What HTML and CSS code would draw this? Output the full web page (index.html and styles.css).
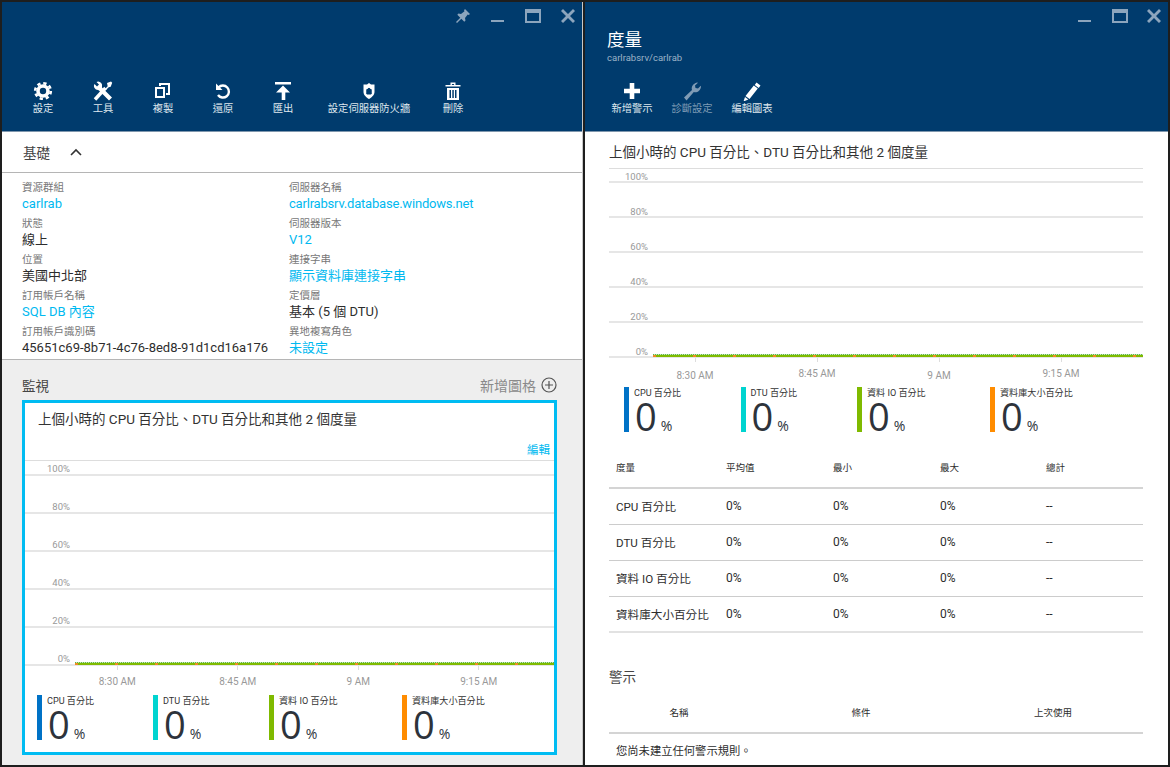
FILE: index.html
```html
<!DOCTYPE html>
<html lang="zh-Hant">
<head>
<meta charset="utf-8">
<title>SQL Database</title>
<link rel="stylesheet" href="styles.css">
</head>
<body>
<div class="desktop">
  <section class="blade blade-left">
    <header class="blade-head">
      <div class="controls">
        <svg class="ctl ctl-pin" viewBox="0 0 16 16"><path d="M10 1l5 5-1.300 1-1-.5L10 10l.5 2.500-1.200 1.200-3-3L2 15l-1-1 4.300-4.300-3-3L3.500 5.500 6 6l3.500-2.800-.5-1z"/></svg>
        <svg class="ctl ctl-min" viewBox="0 0 16 16"><rect x="1" y="12" width="13" height="2"/></svg>
        <svg class="ctl ctl-max" viewBox="0 0 16 16"><path d="M0 1h16v14H0zM2 5v8h12V5z" fill-rule="evenodd"/></svg>
        <svg class="ctl ctl-close" viewBox="0 0 16 16"><path d="M1 3l2-2 5 5 5-5 2 2-5 5 5 5-2 2-5-5-5 5-2-2 5-5z"/></svg>
      </div>
      <div class="toolbar toolbar-left">
        <div class="tool">
          <svg class="ico" viewBox="0 0 20 20"><circle cx="10" cy="10" r="5" fill="none" stroke="#fff" stroke-width="3.600"/><circle cx="10" cy="10" r="7.800" fill="none" stroke="#fff" stroke-width="2.600" stroke-dasharray="3.300 2.830"/></svg>
          <span>設定</span>
        </div>
        <div class="tool">
          <svg class="ico" viewBox="0 0 20 20"><path d="M2 18.500L12.500 7" stroke="#fff" stroke-width="3.400" fill="none"/><path d="M9 3.500A4 4 0 0 0 3.500 1l2.500 2.500-2 2L1.500 3A4 4 0 0 0 5 9l1 .5 10 10 3-3-10-10z" fill="#fff"/><path d="M14 2l4-1.500 1.200 1.200-1.500 4-2 .5-3 3-1-1 3-3z" fill="#fff"/></svg>
          <span>工具</span>
        </div>
        <div class="tool">
          <svg class="ico" viewBox="0 0 20 20"><path d="M3 7h8v9H3z M7 5V3h9v10h-3" fill="none" stroke="#fff" stroke-width="2"/></svg>
          <span>複製</span>
        </div>
        <div class="tool">
          <svg class="ico" viewBox="0 0 20 20"><path d="M5.500 6.500A6 6 0 1 1 5 14" fill="none" stroke="#fff" stroke-width="2.400"/><path d="M3 2.500v6.500h6.500z" fill="#fff"/></svg>
          <span>還原</span>
        </div>
        <div class="tool">
          <svg class="ico" viewBox="0 0 20 20"><path d="M2 1h16v2.400H2zM10 4.500l7 7h-4.700V19H8.700v-7.500H3z" fill="#fff"/></svg>
          <span>匯出</span>
        </div>
        <div class="tool tool-wide">
          <svg class="ico" viewBox="0 0 20 20"><path d="M10 2l2 1.500h3.500V11c0 3-3 5.500-5.500 7-2.500-1.500-5.500-4-5.500-7V3.500H8z" fill="#fff"/><path d="M7.800 8.500h4.400v4.500H7.800zM8.800 8.500a1.200 1.200 0 0 1 2.400 0" fill="#003b6d" stroke="#003b6d"/></svg>
          <span>設定伺服器防火牆</span>
        </div>
        <div class="tool tool-end">
          <svg class="ico" viewBox="0 0 20 20"><path d="M2.500 4h15v1.600h-15zM7.500 1.500h5V4h-1.400V3H8.900v1H7.500z" fill="#fff"/><path d="M4 7h12v12H4zM6.500 9v8h1.500V9zM9.300 9v8h1.500V9zM12 9v8h1.500V9z" fill="#fff" fill-rule="evenodd"/></svg>
          <span>刪除</span>
        </div>
      </div>
    </header>

    <div class="essentials-head">
      <h2 class="essentials-title">基礎</h2>
      <svg class="chevron" viewBox="0 0 12 8"><path d="M1 7l5-5 5 5" fill="none" stroke="#333" stroke-width="1.600"/></svg>
    </div>

    <div class="props">
      <div class="prop"><div class="prop-label">資源群組</div><div class="prop-value link">carlrab</div></div>
      <div class="prop"><div class="prop-label">伺服器名稱</div><div class="prop-value link prop-host">carlrabsrv.database.windows.net</div></div>
      <div class="prop"><div class="prop-label">狀態</div><div class="prop-value">線上</div></div>
      <div class="prop"><div class="prop-label">伺服器版本</div><div class="prop-value link">V12</div></div>
      <div class="prop"><div class="prop-label">位置</div><div class="prop-value">美國中北部</div></div>
      <div class="prop"><div class="prop-label">連接字串</div><div class="prop-value link">顯示資料庫連接字串</div></div>
      <div class="prop"><div class="prop-label">訂用帳戶名稱</div><div class="prop-value link">SQL DB 內容</div></div>
      <div class="prop"><div class="prop-label">定價層</div><div class="prop-value">基本 (5 個 DTU)</div></div>
      <div class="prop"><div class="prop-label">訂用帳戶識別碼</div><div class="prop-value">45651c69-8b71-4c76-8ed8-91d1cd16a176</div></div>
      <div class="prop"><div class="prop-label">異地複寫角色</div><div class="prop-value link">未設定</div></div>
    </div>

    <div class="monitor">
      <div class="monitor-head">
        <h2 class="monitor-title">監視</h2>
        <div class="add-tile">
          <span>新增圖格</span>
          <svg class="add-ico" viewBox="0 0 16 16"><circle cx="8" cy="8" r="7" fill="none" stroke="#555" stroke-width="1.200"/><path d="M8 4v8M4 8h8" stroke="#555" stroke-width="1.200"/></svg>
        </div>
      </div>
      <div class="tile">
        <h3 class="chart-title tile-title">上個小時的 CPU 百分比、DTU 百分比和其他 2 個度量</h3>
        <div class="edit-row"><span class="link edit-link">編輯</span></div>
        <div class="chart chart-small">
          <div class="grid-row"><span>100%</span></div>
          <div class="grid-row"><span>80%</span></div>
          <div class="grid-row"><span>60%</span></div>
          <div class="grid-row"><span>40%</span></div>
          <div class="grid-row"><span>20%</span></div>
          <div class="grid-row grid-zero"><span>0%</span><i class="series"></i></div>
        </div>
        <div class="axis axis-small">
          <div class="tick">8:30 AM</div><div class="tick">8:45 AM</div><div class="tick">9 AM</div><div class="tick">9:15 AM</div>
        </div>
        <div class="legend legend-small">
          <div class="metric m-cpu"><div class="metric-name">CPU 百分比</div><div class="metric-val"><b>0</b><span>%</span></div></div>
          <div class="metric m-dtu"><div class="metric-name">DTU 百分比</div><div class="metric-val"><b>0</b><span>%</span></div></div>
          <div class="metric m-io"><div class="metric-name">資料 IO 百分比</div><div class="metric-val"><b>0</b><span>%</span></div></div>
          <div class="metric m-db"><div class="metric-name">資料庫大小百分比</div><div class="metric-val"><b>0</b><span>%</span></div></div>
        </div>
      </div>
    </div>
  </section>

  <section class="blade blade-right">
    <header class="blade-head">
      <div class="controls controls-right">
        <svg class="ctl ctl-min" viewBox="0 0 16 16"><rect x="1" y="12" width="13" height="2"/></svg>
        <svg class="ctl ctl-max" viewBox="0 0 16 16"><path d="M0 1h16v14H0zM2 5v8h12V5z" fill-rule="evenodd"/></svg>
        <svg class="ctl ctl-close" viewBox="0 0 16 16"><path d="M1 3l2-2 5 5 5-5 2 2-5 5 5 5-2 2-5-5-5 5-2-2 5-5z"/></svg>
      </div>
      <div class="blade-titles">
        <h1 class="blade-title">度量</h1>
        <div class="blade-sub">carlrabsrv/carlrab</div>
      </div>
      <div class="toolbar toolbar-right">
        <div class="tool">
          <svg class="ico" viewBox="0 0 20 20"><path d="M7.700 2h4.600v5.700H18v4.600h-5.700V18H7.700v-5.700H2V7.700h5.700z" fill="#fff"/></svg>
          <span>新增警示</span>
        </div>
        <div class="tool tool-off">
          <svg class="ico" viewBox="0 0 20 20"><path d="M2 16.500l8-7.500c-1-3 1-6.500 5-7.500l1 .3-3 2.700.5 2.500 2.500.5 2.800-2.800.2 1c-.5 4-4 6.300-7.200 5.300L4.500 19.500z" fill="#7f9bb5"/></svg>
          <span>診斷設定</span>
        </div>
        <div class="tool">
          <svg class="ico" viewBox="0 0 20 20"><path d="M14.500 1.500l4 3-1.800 2.500-4-3zM11.800 4.500l4 3-8.300 10.500-4-3zM3 16l3.300 2.600L1.500 20.500z" fill="#fff"/></svg>
          <span>編輯圖表</span>
        </div>
      </div>
    </header>

    <div class="metrics-body">
      <h3 class="chart-title">上個小時的 CPU 百分比、DTU 百分比和其他 2 個度量</h3>
      <div class="chart chart-large">
        <div class="grid-row"><span>100%</span></div>
        <div class="grid-row"><span>80%</span></div>
        <div class="grid-row"><span>60%</span></div>
        <div class="grid-row"><span>40%</span></div>
        <div class="grid-row"><span>20%</span></div>
        <div class="grid-row grid-zero"><span>0%</span><i class="series"></i></div>
      </div>
      <div class="axis axis-large">
        <div class="tick">8:30 AM</div><div class="tick">8:45 AM</div><div class="tick">9 AM</div><div class="tick">9:15 AM</div>
      </div>
      <div class="legend legend-large">
        <div class="metric m-cpu"><div class="metric-name">CPU 百分比</div><div class="metric-val"><b>0</b><span>%</span></div></div>
        <div class="metric m-dtu"><div class="metric-name">DTU 百分比</div><div class="metric-val"><b>0</b><span>%</span></div></div>
        <div class="metric m-io"><div class="metric-name">資料 IO 百分比</div><div class="metric-val"><b>0</b><span>%</span></div></div>
        <div class="metric m-db"><div class="metric-name">資料庫大小百分比</div><div class="metric-val"><b>0</b><span>%</span></div></div>
      </div>

      <div class="mtable">
        <div class="mrow mhead"><div>度量</div><div>平均值</div><div>最小</div><div>最大</div><div>總計</div></div>
        <div class="mrow"><div>CPU 百分比</div><div>0%</div><div>0%</div><div>0%</div><div>--</div></div>
        <div class="mrow"><div>DTU 百分比</div><div>0%</div><div>0%</div><div>0%</div><div>--</div></div>
        <div class="mrow"><div>資料 IO 百分比</div><div>0%</div><div>0%</div><div>0%</div><div>--</div></div>
        <div class="mrow mlast"><div>資料庫大小百分比</div><div>0%</div><div>0%</div><div>0%</div><div>--</div></div>
      </div>

      <h2 class="alerts-title">警示</h2>
      <div class="arow"><div>名稱</div><div>條件</div><div>上次使用</div></div>
      <div class="aempty">您尚未建立任何警示規則。</div>
    </div>
  </section>
</div>
</body>
</html>
```

FILE: styles.css
```css
* { box-sizing: border-box; }
html, body { margin: 0; padding: 0; height: 100%; overflow: hidden; }
body {
  background: #1e1e1e;
  color: #2d2d2d;
  font-family: Roboto, "Noto Sans CJK TC", sans-serif;
  font-size: 13px;
}
h1, h2, h3 { margin: 0; font-weight: 400; }
.link { color: #00b9f0; }

.desktop { display: flex; gap: 2px; padding: 2px; height: 767px; }
.blade { display: flex; flex-direction: column; background: #fff; overflow: hidden; }
.blade-left { width: 581px; border-right: 1px solid #c8c8c8; }
.blade-right { flex: 1; }

.blade-head {
  height: 130px;
  flex: none;
  background: #003b6d;
  border-bottom: 1px solid #7f97ad;
  display: flex;
  flex-direction: column;
  color: #fff;
}
.controls { display: flex; justify-content: flex-end; gap: 19px; padding: 6px 6px 0 0; height: 26px; flex: none; }
.controls-right { gap: 18.500px; }
.ctl { width: 16px; height: 16px; fill: #8ca5bd; display: block; }

.toolbar { display: flex; margin-top: auto; padding-bottom: 15px; }
.toolbar-left { padding-left: 11px; }
.toolbar-right { padding-left: 17px; }
.tool { width: 60px; display: flex; flex-direction: column; align-items: center; font-size: 10.300px; line-height: 14px; color: #dfe7ee; }
.tool-wide { width: 112px; }
.tool-end { width: 56px; }
.tool-off { color: #7f9bb5; }
.ico { width: 20px; height: 20px; display: block; margin-bottom: 1px; }

.blade-titles { padding: 1px 0 0 22px; }
.blade-title { font-size: 17.500px; line-height: 22px; color: #fff; }
.blade-sub { font-size: 9.500px; line-height: 14px; color: #9db3c8; }

.essentials-head { height: 41px; flex: none; display: flex; align-items: center; padding: 0 0 1px 21px; border-bottom: 1px solid #b5b5b5; }
.essentials-title { font-size: 13.500px; color: #444; }
.chevron { width: 12px; height: 8px; margin-left: 20px; }

.props {
  height: 187px;
  flex: none;
  display: grid;
  grid-template-columns: 267px 1fr;
  grid-auto-rows: 36px;
  padding: 7px 0 0 20px;
  border-bottom: 1px solid #b5b5b5;
}
.prop-label { font-size: 10.500px; line-height: 16px; height: 15px; color: #777; }
.prop-value { font-size: 13px; line-height: 18px; white-space: nowrap; }
.prop-host { letter-spacing: -0.200px; }

.monitor { flex: 1; background: #eee; padding: 0 25px 10px 20px; display: flex; flex-direction: column; min-height: 0; }
.monitor-head { display: flex; justify-content: space-between; align-items: center; height: 40px; flex: none; padding-top: 10px; }
.monitor-title { font-size: 13.500px; color: #444; }
.add-tile { display: flex; align-items: center; gap: 5px; color: #8a8a8a; font-size: 14px; }
.add-ico { width: 16px; height: 16px; display: block; }

.tile { flex: 1; background: #fff; border: 3px solid #00bcf2; display: flex; flex-direction: column; min-height: 0; }
.chart-title { font-size: 13.500px; line-height: 20px; color: #333; white-space: nowrap; }
.tile-title { padding: 6px 0 0 13px; height: 32px; flex: none; }
.edit-row { display: flex; justify-content: flex-end; padding-right: 4px; height: 25px; line-height: 20px; font-size: 11.500px; flex: none; align-items: flex-end; }

.chart { border-top: 1px solid #ddd; flex: none; }
.grid-row { position: relative; display: flex; align-items: flex-start; border-bottom: 2px solid #e6e6e6; font-size: 9.500px; line-height: 14px; color: #999; }
.grid-row span { display: block; text-align: right; }
.chart-small .grid-row { height: 38px; padding: 24px 0 0 20px; }
.chart-small .grid-row:first-child { height: 15px; padding-top: 1px; }
.chart-small .grid-row span { width: 25px; }
.chart-large .grid-row { height: 35px; padding: 22px 0 0 15px; }
.chart-large .grid-row:first-child { height: 14px; padding-top: 1px; }
.chart-large .grid-row span { width: 24px; }
.series {
  position: absolute;
  right: 0;
  bottom: -1px;
  height: 3px;
  background:
    repeating-linear-gradient(90deg, #f08a24 0 3px, transparent 3px 40px) 0 1px / 100% 2px no-repeat,
    repeating-linear-gradient(90deg, #5fb84a 0 1px, #c9e8b8 1px 2px) 0 0 / 100% 1px no-repeat,
    linear-gradient(#7fba00, #7fba00) 0 1px / 100% 2px no-repeat;
}
.chart-small .series { left: 50px; }
.chart-large .series { left: 44px; }

.axis { display: flex; flex: none; font-size: 10px; color: #999; }
.tick { text-align: center; line-height: 14px; }
.tick::before { content: ""; display: block; width: 1px; height: 4px; background: #ddd; margin: 0 auto; }
.axis-small { padding-left: 32px; height: 29px; }
.axis-small .tick { width: 120.500px; }
.axis-small .tick::before { margin-bottom: 5px; }
.axis-large { padding-left: 25px; height: 29px; }
.axis-large .tick { width: 122px; }
.axis-large .tick::before { margin-bottom: 7px; }
.axis-large .tick:nth-child(even)::before { margin-bottom: 5px; }

.legend { display: flex; flex: none; }
.legend-small { padding-left: 12px; }
.legend-large { padding-left: 15px; }
.metric { height: 45px; border-left: 5px solid #0072c6; padding-left: 5px; flex: none; }
.legend-small .metric { width: 116px; }
.legend-small .m-io { width: 133px; }
.legend-large .metric { width: 116.500px; }
.legend-large .m-io { width: 133px; }
.m-dtu { border-left-color: #00d4d0; }
.m-io { border-left-color: #7fba00; }
.m-db { border-left-color: #ff8c00; }
.metric-name { font-size: 9.100px; line-height: 12px; color: #333; white-space: nowrap; }
.metric-val { display: flex; align-items: baseline; gap: 4px; line-height: 35px; padding-left: 1px; color: #2d333b; font-family: "Open Sans", sans-serif; }
.metric-val b { font-weight: 400; font-size: 38px; }
.metric-val span { font-size: 14px; font-weight: 400; }

.metrics-body { flex: 1; padding: 10px 25px 0 24px; overflow: hidden; min-height: 0; }
.metrics-body > .chart-title { height: 26px; }
.mtable { margin-top: 20px; }
.mrow { display: grid; grid-template-columns: 110px 107px 107px 106px 1fr; padding: 0 0 1px 7px; height: 36px; align-items: center; border-bottom: 1px solid #ccc; font-size: 12px; }
.mrow > div:first-child { font-size: 11.600px; }
.mhead { height: 37px; font-size: 9.500px; padding-bottom: 6px; border-bottom-width: 2px; border-bottom-color: #d4d4d4; }
.mhead > div:first-child { font-size: 9.500px; }
.mrow > div { white-space: nowrap; }
.mlast { border-bottom: 2px solid #e2e2e2; }
.alerts-title { font-size: 13.500px; color: #444; margin-top: 34px; line-height: 20px; }
.arow { display: grid; grid-template-columns: 140px 224px 160px; height: 42px; margin-top: 5px; align-items: center; text-align: center; font-size: 9.500px; border-bottom: 2px solid #d4d4d4; }
.aempty { font-size: 11.300px; padding: 9px 0 0 7px; line-height: 18px; white-space: nowrap; }
```
